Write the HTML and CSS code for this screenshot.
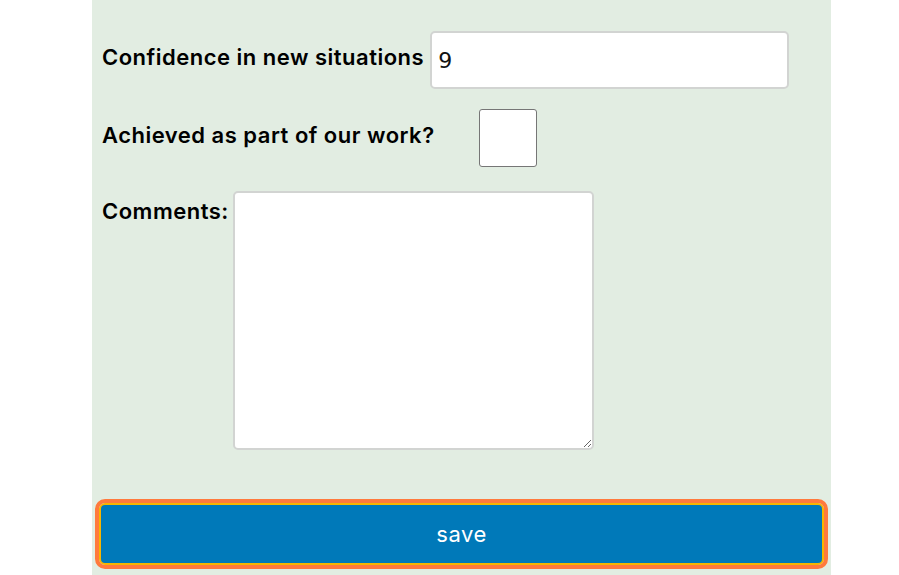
FILE: index.html
```html
<!DOCTYPE html>
<html lang="en">
<head>
<meta charset="utf-8">
<title>Form</title>
<link rel="stylesheet" href="styles.css">
</head>
<body>
<main class="panel">
  <form class="form">
    <div class="row row-text">
      <label class="label" for="conf">Confidence in new situations</label>
      <input class="text-input" id="conf" type="text" value="9">
    </div>
    <div class="row row-check">
      <label class="label label-check" for="ach">Achieved as part of our work?</label>
      <input class="check" id="ach" type="checkbox">
    </div>
    <div class="row row-area">
      <label class="label" for="com">Comments:</label>
      <textarea class="area" id="com"></textarea>
    </div>
    <button class="save" type="button">save</button>
  </form>
</main>
</body>
</html>
```

FILE: styles.css
```css
html, body {
  margin: 0;
  padding: 0;
  background: #ffffff;
}
body {
  font-family: "Inter", "Liberation Sans", sans-serif;
  color: #000;
  height: 575px;
  overflow: hidden;
}
.panel {
  margin-left: 92px;
  width: 739px;
  height: 575px;
  background: #e2ede2;
  box-sizing: border-box;
  padding: 31px 7px 0 7px;
}
.form {
  display: flex;
  flex-direction: column;
}
.row {
  display: flex;
  align-items: center;
}
.label {
  font-size: 22px;
  font-weight: 600;
  padding-left: 3px;
  letter-spacing: 0.5px;
  line-height: 1.2;
  margin-bottom: 6px;
}
.text-input {
  margin-left: 6px;
  width: 359px;
  height: 58px;
  box-sizing: border-box;
  border: 2px solid #d2d4d2;
  border-radius: 5px;
  background: #fff;
  padding: 0 6px;
  font-family: "DejaVu Sans", sans-serif;
  font-size: 22px;
  color: #111;
  outline: none;
}
.row-check {
  margin-top: 20px;
}
.label-check {
  width: 377px;
}
.check {
  appearance: none;
  -webkit-appearance: none;
  margin: 0;
  width: 58px;
  height: 58px;
  box-sizing: border-box;
  border: 1px solid #767676;
  border-radius: 3px;
  background: #fff;
}
.row-area {
  margin-top: 24px;
  align-items: flex-start;
}
.row-area .label {
  margin-top: 7px;
}
.area {
  margin-left: 4px;
  width: 361px;
  height: 259px;
  box-sizing: border-box;
  border: 2px solid #d2d4d2;
  border-radius: 5px;
  background: #fff;
  resize: both;
  outline: none;
}
.save {
  margin-top: 53px;
  width: 725px;
  height: 62px;
  box-sizing: border-box;
  background: #0079b9;
  color: #fff;
  border: 2px solid #f7b500;
  border-radius: 6px;
  outline: 4px solid #ff7a3d;
  outline-offset: 0;
  font-family: "Inter", "Liberation Sans", sans-serif;
  font-size: 22px;
  font-weight: 400;
  letter-spacing: 0.5px;
  cursor: pointer;
}
```
